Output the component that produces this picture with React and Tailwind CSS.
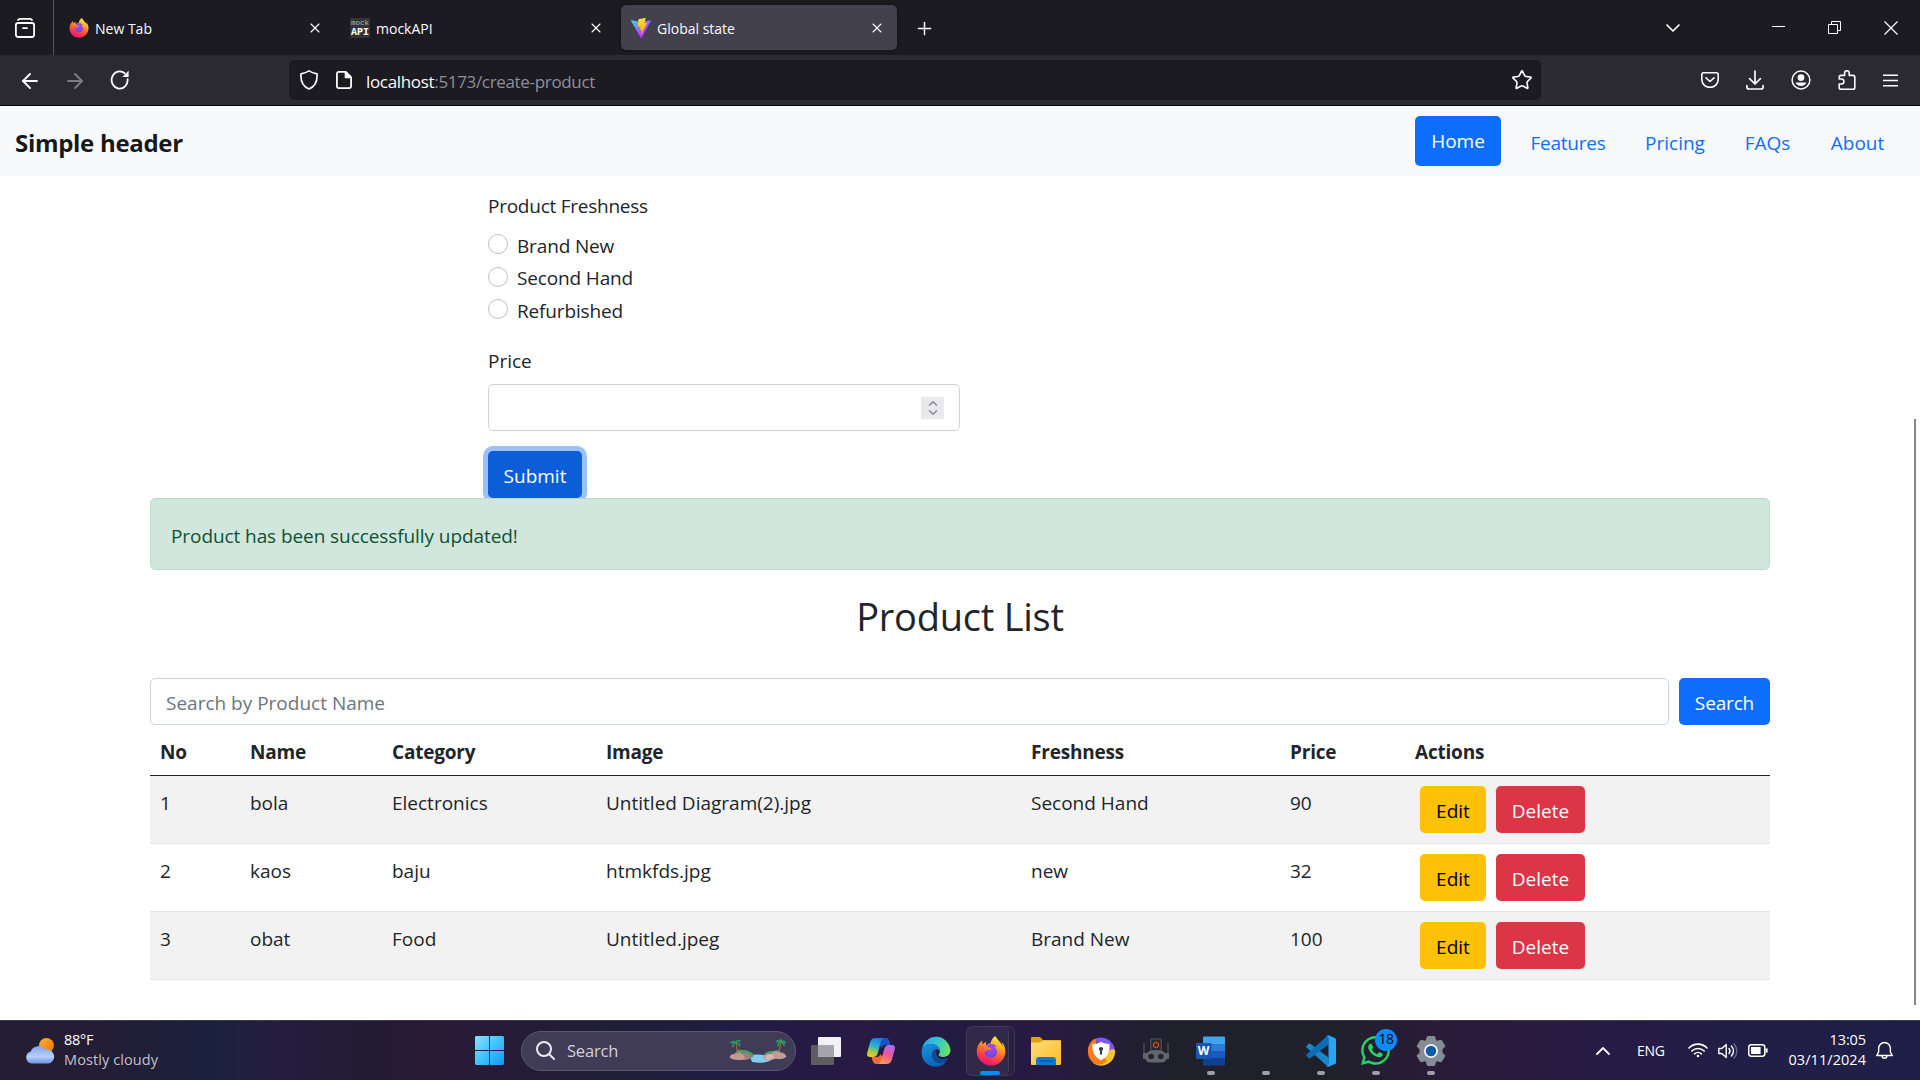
import React from "react";
import { X, Plus, ChevronDown, ArrowLeft, ArrowRight, Star } from "lucide-react";
import { FaFirefoxBrowser, FaWhatsapp } from "react-icons/fa";

function FirefoxLogo({ className = "" }) {
  return (
    <span className={`relative block ${className}`}>
      <svg viewBox="0 0 32 32" className="absolute inset-0 h-full w-full">
        <defs>
          <linearGradient id="fx" x1="0.75" y1="0" x2="0.35" y2="1">
            <stop offset="0" stopColor="#fff44f" />
            <stop offset="0.3" stopColor="#ffb224" />
            <stop offset="0.55" stopColor="#ff6a2b" />
            <stop offset="0.8" stopColor="#ff2f52" />
            <stop offset="1" stopColor="#e3127f" />
          </linearGradient>
          <radialGradient id="fxp" cx="0.5" cy="0.3" r="0.8">
            <stop offset="0" stopColor="#a34dff" />
            <stop offset="1" stopColor="#5a3fd0" />
          </radialGradient>
        </defs>
        <circle cx="16" cy="16.5" r="8.6" fill="url(#fxp)" />
      </svg>
      <FaFirefoxBrowser className="absolute inset-0 h-full w-full fill-[url(#fx)]" />
    </span>
  );
}

function ViteLogo() {
  return (
    <svg viewBox="0 0 256 257" className="h-5 w-5">
      <defs>
        <linearGradient id="v1" x1="-0.8%" x2="57.6%" y1="7.6%" y2="78.4%">
          <stop offset="0" stopColor="#41D1FF" />
          <stop offset="1" stopColor="#BD34FE" />
        </linearGradient>
        <linearGradient id="v2" x1="43.4%" x2="50.3%" y1="2.2%" y2="89%">
          <stop offset="0" stopColor="#FFEA83" />
          <stop offset="0.08" stopColor="#FFDD35" />
          <stop offset="1" stopColor="#FFA800" />
        </linearGradient>
      </defs>
      <path fill="url(#v1)" d="M255.153 37.938L134.897 252.976c-2.483 4.44-8.862 4.466-11.382.048L.875 37.958c-2.746-4.814 1.371-10.646 6.827-9.67l120.385 21.517a6.537 6.537 0 0 0 2.322-.004l117.867-21.483c5.438-.991 9.574 4.796 6.877 9.62Z" />
      <path fill="url(#v2)" d="M185.432.063L96.44 17.501a3.268 3.268 0 0 0-2.634 3.014l-5.474 92.456a3.268 3.268 0 0 0 3.997 3.378l24.777-5.718c2.318-.535 4.413 1.507 3.936 3.838l-7.361 36.047c-.495 2.426 1.782 4.5 4.151 3.78l15.304-4.649c2.372-.72 4.652 1.36 4.15 3.788l-11.698 56.621c-.732 3.542 3.979 5.473 5.943 2.437l1.313-2.028l72.516-144.72c1.215-2.423-.88-5.186-3.54-4.672l-25.505 4.922c-2.396.462-4.435-1.77-3.759-4.114l16.646-57.705c.677-2.35-1.37-4.583-3.769-4.113Z" />
    </svg>
  );
}

function Tab({ icon, title, active, className = "" }) {
  return (
    <div
      className={`flex h-[45px] shrink-0 items-center rounded-[5px] pl-[10px] pr-[12px] ${active ? "bg-[#42414d] shadow-[0_0_4px_rgba(0,0,0,0.5)]" : ""} ${className}`}
    >
      <span className="w-5 shrink-0">{icon}</span>
      <span className="flex-1 whitespace-nowrap pl-[6px] pt-[2px] text-[14px] leading-5 text-[#fbfbfe]">{title}</span>
      <X className="h-4 w-4 shrink-0 text-[#fbfbfe]" strokeWidth={1.7} />
    </div>
  );
}

function TabBar() {
  return (
    <div className="flex h-[55px] items-center bg-[#1c1b22] text-[#fbfbfe]">
      <div className="flex h-full w-[54px] items-center border-r border-[#55545c] pl-[15px]">
        <svg viewBox="0 0 20 20" className="h-5 w-5" fill="none" stroke="currentColor" strokeWidth="1.8" strokeLinecap="round">
          <rect x="0.9" y="5" width="18.2" height="14" rx="2.2" />
          <path d="M3 2 Q3.6 0.9 5 0.9 H15 Q16.4 0.9 17 2" />
          <path d="M8 10.2 H12" />
        </svg>
      </div>
      <Tab className="ml-[5px] w-[276px]" icon={<FirefoxLogo className="h-5 w-5" />} title="New Tab" />
      <Tab
        className="ml-[5px] w-[276px]"
        icon={
          <span className="block h-5 w-5 bg-[#333] text-center font-['Liberation_Mono']">
            <span className="block h-[10px] text-[7.5px] leading-[10px] text-[#b8b8b8]">mock</span>
            <span className="block text-[10px] font-bold leading-[9px] text-white">API</span>
          </span>
        }
        title="mockAPI"
      />
      <Tab className="ml-[5px] w-[276px]" active icon={<ViteLogo />} title="Global state" />
      <Plus className="ml-[17px] mt-[2px] h-[21px] w-[21px]" strokeWidth={1.7} />
      <div className="ml-auto flex items-center pr-[22px]">
        <ChevronDown className="mr-[87px] h-6 w-6" strokeWidth={1.7} />
        <svg viewBox="0 0 13 13" className="mr-[43px] h-[13px] w-[13px]" stroke="currentColor">
          <path d="M0 5.5 H13" />
        </svg>
        <svg viewBox="0 0 13 13" className="mr-[43px] h-[13px] w-[13px]" fill="none" stroke="currentColor">
          <path d="M0.5 3.5 H9.5 V12.5 H0.5 Z M3.5 3.5 V0.5 H12.5 V9.5 H9.5" />
        </svg>
        <svg viewBox="0 0 14 14" className="h-[14px] w-[14px]" stroke="currentColor" strokeWidth="1.2">
          <path d="M0.5 0.5 L13.5 13.5 M13.5 0.5 L0.5 13.5" />
        </svg>
      </div>
    </div>
  );
}

function NavBar() {
  return (
    <div className="flex h-[51px] items-center border-b border-[#08080c] bg-[#2b2a33] text-[#fbfbfe]">
      <ArrowLeft className="ml-[18px] mt-px h-6 w-6" strokeWidth={1.9} />
      <ArrowRight className="ml-[21px] mt-px h-6 w-6 text-[#7b7a82]" strokeWidth={1.9} />
      <svg viewBox="0 0 20 20" className="ml-[23px] h-5 w-5" fill="none" stroke="currentColor" strokeWidth="1.8" strokeLinecap="round">
        <path d="M17.6 9.2 A8 8.6 0 1 1 14.6 3.3" />
        <path d="M18.6 0.8 V7 H12.4 Z" fill="currentColor" stroke="none" />
      </svg>
      <div className="ml-[159px] flex h-10 w-[1252px] items-center rounded-[5px] bg-[#1c1b22]">
        <svg viewBox="0 0 20 20" className="ml-[10px] h-5 w-5" fill="none" stroke="currentColor" strokeWidth="1.7" strokeLinejoin="round">
          <path d="M10 0.9 C12.5 2.6 15 3.3 18 3.8 C18.6 10.5 16.2 16.3 10 19.1 C3.8 16.3 1.4 10.5 2 3.8 C5 3.3 7.5 2.6 10 0.9 Z" />
        </svg>
        <svg viewBox="0 0 16 18" className="ml-[17px] h-[18px] w-4" fill="none" stroke="currentColor" strokeWidth="1.8" strokeLinejoin="round">
          <path d="M9.6 0.9 H3 Q0.9 0.9 0.9 3 V15 Q0.9 17.1 3 17.1 H13 Q15.1 17.1 15.1 15 V6.4 Z" />
          <path d="M9.6 0.9 V6.4 H15.1 Z" fill="currentColor" />
        </svg>
        <span className="ml-[14px] flex-1 pt-1 text-[17px] leading-6 tracking-[-0.33px] text-[#8f8f96]">
          <span className="text-[#fbfbfe]">localhost</span>:5173/create-product
        </span>
        <Star className="mr-[8px] h-[22px] w-[22px]" strokeWidth={1.8} />
      </div>
      <div className="ml-auto flex items-center pr-[22px]">
        <svg viewBox="0 0 18 16" className="mr-[27px] h-4 w-[18px]" fill="none" stroke="currentColor" strokeWidth="1.6" strokeLinecap="round" strokeLinejoin="round">
          <path d="M2.6 0.8 H15.4 Q17.2 0.8 17.2 2.6 V7.4 A8.2 8 0 0 1 0.8 7.4 V2.6 Q0.8 0.8 2.6 0.8 Z" />
          <path d="M5 5.8 L9 9.5 L13 5.8" />
        </svg>
        <svg viewBox="0 0 18 20" className="mr-[27px] h-5 w-[18px]" fill="none" stroke="currentColor" strokeWidth="1.7" strokeLinecap="round" strokeLinejoin="round">
          <path d="M9 1 V14 M3.6 8.6 L9 14 L14.4 8.6" />
          <path d="M0.9 15.5 V17 Q0.9 19 3 19 H15 Q17.1 19 17.1 17 V15.5" />
        </svg>
        <svg viewBox="0 0 20 20" className="mr-[27px] h-5 w-5" fill="none" stroke="currentColor" strokeWidth="1.5">
          <circle cx="10" cy="10" r="8.9" />
          <circle cx="10" cy="7.6" r="3.4" fill="currentColor" stroke="none" />
          <path d="M4.6 12.6 H15.4 Q14 16 10 16 Q6 16 4.6 12.6 Z" fill="currentColor" stroke="none" />
        </svg>
        <svg viewBox="0 0 18 20" className="mr-[27px] h-5 w-[18px]" fill="none" stroke="currentColor" strokeWidth="1.6" strokeLinejoin="round">
          <path d="M1.2 9 V7.2 Q1.2 5.4 3 5.4 H6.6 V3 A2.3 2.3 0 0 1 11.2 3 V5.4 H15 Q16.8 5.4 16.8 7.2 V17.4 Q16.8 19.2 15 19.2 H3 Q1.2 19.2 1.2 17.4 V14 H3.4 A2.4 2.4 0 0 0 3.4 9 Z" />
        </svg>
        <svg viewBox="0 0 15 13" className="h-[13px] w-[15px]" stroke="currentColor" strokeWidth="1.5">
          <path d="M0 1.2 H15 M0 6.5 H15 M0 11.8 H15" />
        </svg>
      </div>
    </div>
  );
}

function SiteHeader() {
  return (
    <header className="flex h-[70px] justify-between bg-[#f8f9fb] pl-[15px] pr-[15px]">
      <span className="pt-[19px] text-[24px] font-bold leading-9 tracking-[-0.3px] text-[#16181b]">Simple header</span>
      <nav className="flex text-[19px] text-[#0d6efd]">
        <a className="mt-[10px] mr-[10px] flex h-[50px] w-[86px] justify-center rounded-[5px] bg-[#0d6efd] pt-[9px] leading-8 text-white">Home</a>
        <a className="w-[114px] pt-[21px] text-center leading-8 tracking-[-0.25px]">Features</a>
        <a className="w-[100px] pt-[21px] text-center leading-8">Pricing</a>
        <a className="w-[85px] pt-[21px] text-center leading-8">FAQs</a>
        <a className="w-[95px] pt-[21px] text-center leading-8">About</a>
      </nav>
    </header>
  );
}

function ProductForm() {
  return (
    <form className="ml-[488px] flex w-[472px] flex-col pt-[14px]">
      <span className="h-10 leading-8 tracking-[-0.25px]">Product Freshness</span>
      {["Brand New", "Second Hand", "Refurbished"].map((label, i) => (
        <label key={label} className={`flex ${i === 0 ? "h-[33px]" : "h-8"}`}>
          <span className="mt-1 h-5 w-5 rounded-full border border-[#bfbfbf] bg-white" />
          <span className={`pl-[9px] tracking-[-0.15px] ${i === 1 ? "leading-[30px]" : "leading-8"}`}>{label}</span>
        </label>
      ))}
      <span className="mt-[18px] h-[39px] leading-8">Price</span>
      <div className="flex h-[47px] items-center justify-end rounded-[5px] border border-[#ced4da] pr-[15px]">
        <span className="flex h-[22px] w-[23px] items-center justify-center bg-[#e9e9ed]">
          <svg viewBox="0 0 10 16" className="h-4 w-[10px]" fill="none" stroke="#8f8f9d" strokeWidth="1.7">
            <path d="M1 5.5 L5 1.8 L9 5.5 M1 10.5 L5 14.2 L9 10.5" />
          </svg>
        </span>
      </div>
      <button type="button" className="mt-5 h-[47px] w-[94px] rounded-[5px] bg-[#0b5ed7] pt-[1px] text-center leading-[48px] text-white ring-5 ring-[#98c1fe]">
        Submit
      </button>
    </form>
  );
}

const products = [
  ["1", "bola", "Electronics", "Untitled Diagram(2).jpg", "Second Hand", "90"],
  ["2", "kaos", "baju", "htmkfds.jpg", "new", "32"],
  ["3", "obat", "Food", "Untitled.jpeg", "Brand New", "100"],
];

const columns = "grid grid-cols-[90px_142px_214px_425px_259px_125px_1fr]";

function ProductTable() {
  return (
    <div>
      <div className={`${columns} h-[51px] border-b border-[#212529] pt-[11px] font-bold leading-8 tracking-[-0.2px]`}>
        {["No", "Name", "Category", "Image", "Freshness", "Price", "Actions"].map((h) => (
          <span key={h} className="pl-[10px]">{h}</span>
        ))}
      </div>
      {products.map((row, i) => (
        <div key={row[0]} className={`${columns} h-[68px] border-b border-[#dee2e6] pt-[10px] leading-8 ${i % 2 === 0 ? "bg-[#f2f2f2]" : ""}`}>
          {row.map((cell, j) => (
            <span key={j} className="whitespace-nowrap pl-[10px] pt-px">{cell}</span>
          ))}
          <span className="flex pl-[15px]">
            <button type="button" className="mr-[10px] h-[47px] w-[66px] rounded-[5px] bg-[#ffc107] pt-[3px] text-center text-black">Edit</button>
            <button type="button" className="h-[47px] w-[89px] rounded-[5px] bg-[#dc3545] pt-[3px] text-center text-white">Delete</button>
          </span>
        </div>
      ))}
    </div>
  );
}

function AppCell({ children, running }) {
  return (
    <div className="relative flex h-[60px] w-[55px] shrink-0 items-center justify-center">
      {children}
      {running && <span className="absolute bottom-[6px] left-[24px] h-1 w-2 rounded-full bg-[#a09fa9]" />}
    </div>
  );
}

function WeatherIcon() {
  return (
    <svg viewBox="0 0 30 26" className="h-[26px] w-[30px]">
      <defs>
        <linearGradient id="sun" x1="0" y1="0" x2="1" y2="1">
          <stop offset="0" stopColor="#fbb52b" />
          <stop offset="1" stopColor="#f0700e" />
        </linearGradient>
        <linearGradient id="cloud" x1="0" y1="0" x2="0" y2="1">
          <stop offset="0" stopColor="#7fa4ea" />
          <stop offset="0.6" stopColor="#b7d0fb" />
          <stop offset="1" stopColor="#6a94e6" />
        </linearGradient>
      </defs>
      <circle cx="21.5" cy="7.5" r="7.5" fill="url(#sun)" />
      <path d="M6.5 25.5 A6 6 0 0 1 5.5 13.8 A8.6 8.6 0 0 1 20.5 11.6 A6.8 6.8 0 1 1 23.5 25.5 Z" fill="url(#cloud)" />
    </svg>
  );
}

function SearchScene() {
  return (
    <svg viewBox="0 0 60 26" className="h-[26px] w-[58px]">
      <path d="M21 18 Q30 15 39 18 L44 22 Q38 26.5 24 24.5 Z" fill="#82cdf0" />
      <path d="M5 17 Q9 10 13 12 Q20 11 26 17 L24 20 H4 Z" fill="#4b9a68" />
      <path d="M36 16 Q42 12 46 13 Q53 10 56 18 L40 20 Z" fill="#4b9a68" />
      <path d="M0.5 20 Q2 15 6 16.5 Q9 11.5 13 16 Q19 14.5 23.5 19 Q21 22.5 14 22 Q5 23 0.5 20 Z" fill="#c59a94" />
      <path d="M13 16 Q17 17 16 22 L22 20.5 L23.5 19 Q19 14.5 13 16 Z" fill="#a8797a" />
      <path d="M35 20 Q38 15 43 16 Q47 11.5 52 14.5 Q58 14 59.5 19 Q56 22.5 48 21 Q40 24 35 20 Z" fill="#c59a94" />
      <path d="M43 16 Q47 17 46 21 L40 22 Q37 21 38 18 Z" fill="#dab4ab" />
      <path d="M7.5 5 L9 16 M54 3.5 L51.5 14" stroke="#a86b2c" strokeWidth="1.3" />
      <path d="M7 4.5 Q4 2 1.5 5 M7 4.5 Q4 5 4 9 M7 4.5 Q9 1 12 3 M7 4.5 Q11 5 11 8 M54 3.5 Q51 1 48.5 4 M54 3.5 Q51 4 50.5 8 M54 3.5 Q57 1.5 58.5 5 M54 3.5 V0.5 M54 3.5 Q57 4.5 57 7.5" stroke="#2b9a66" strokeWidth="1.7" fill="none" />
    </svg>
  );
}

function StartIcon() {
  return (
    <svg viewBox="0 0 29 29" className="h-[29px] w-[29px]">
      <defs>
        <linearGradient id="win" gradientUnits="userSpaceOnUse" x1="0" y1="0" x2="29" y2="29">
          <stop offset="0" stopColor="#8be1ff" />
          <stop offset="0.5" stopColor="#3fc3fd" />
          <stop offset="1" stopColor="#0f96fb" />
        </linearGradient>
      </defs>
      <path fill="url(#win)" d="M1 0 H14 V14 H0 V1 Z M15 0 H28 L29 1 V14 H15 Z M0 15 H14 V29 H1 L0 28 Z M15 15 H29 V28 L28 29 H15 Z" />
    </svg>
  );
}

function TaskViewIcon() {
  return (
    <svg viewBox="0 0 30 28" className="h-[28px] w-[30px]">
      <rect x="0" y="8" width="23" height="20" rx="1" fill="#5e5d62" />
      <rect x="7" y="0" width="23" height="20" rx="1" fill="#f2f2f4" />
      <path d="M7 8 H23 V20 H7 Z" fill="#a6a5ab" />
    </svg>
  );
}

function CopilotIcon() {
  return (
    <svg viewBox="0 0 28 26" className="h-[26px] w-[28px]">
      <defs>
        <linearGradient id="cp1" x1="0.6" y1="0" x2="0.3" y2="1">
          <stop offset="0" stopColor="#1f7ae8" />
          <stop offset="0.45" stopColor="#2fb3cf" />
          <stop offset="0.75" stopColor="#9fcf3f" />
          <stop offset="1" stopColor="#f5c527" />
        </linearGradient>
        <linearGradient id="cp2" x1="0.7" y1="0" x2="0.3" y2="1">
          <stop offset="0" stopColor="#a96bf4" />
          <stop offset="0.5" stopColor="#f0559a" />
          <stop offset="1" stopColor="#fb9b4b" />
        </linearGradient>
      </defs>
      <path d="M15 0 H19.5 Q21.5 0 22.3 3 L23.5 7 H18 Q15.5 7 14.7 10 L12.5 7 Z" fill="#1b52c4" />
      <path d="M13 26 H8.5 Q6.5 26 5.7 23 L4.5 19 H10 Q12.5 19 13.3 16 L15.5 19 Z" fill="#f26a3a" />
      <path d="M8.5 0 H17 Q14.8 0.6 14 3.6 L10.8 15 Q9.8 19 6 19 H3 Q-0.8 19 0.3 14.5 L3.2 4 Q4.4 0 8.5 0 Z" fill="url(#cp1)" />
      <path d="M19.5 26 H11 Q13.2 25.4 14 22.4 L17.2 11 Q18.2 7 22 7 H25 Q28.8 7 27.7 11.5 L24.8 22 Q23.6 26 19.5 26 Z" fill="url(#cp2)" />
    </svg>
  );
}

function EdgeIcon() {
  return (
    <svg viewBox="0 0 32 32" className="h-[32px] w-[30px]" preserveAspectRatio="none">
      <defs>
        <linearGradient id="e1" x1="0" y1="0.3" x2="1" y2="0.5">
          <stop offset="0" stopColor="#2ba8e8" />
          <stop offset="0.5" stopColor="#2fc4d8" />
          <stop offset="1" stopColor="#6fe25c" />
        </linearGradient>
        <linearGradient id="e2" x1="0" y1="0" x2="0.6" y2="1">
          <stop offset="0" stopColor="#1b94e0" />
          <stop offset="1" stopColor="#0c5fb8" />
        </linearGradient>
      </defs>
      <path d="M1 14 A15.5 15.5 0 0 1 31.5 15 C31.5 20 27 22 23.5 22 C20 22 18.6 20.6 18.8 19.6 C19.2 18.6 20.3 18 20 15.5 C19.5 11 14 8.5 9.5 9 C5 9.5 2 12 1 14 Z" fill="url(#e1)" />
      <path d="M0.6 17 C0.6 11 6 8.6 10.5 9 C16 9.5 20.4 12.5 20 16 C17 12.5 12 15 12 20 C12 26.5 19 30 27 25.5 C25 29.5 20.5 31.8 16 31.8 C7 31.8 0.6 25.5 0.6 17 Z" fill="url(#e2)" />
      <path d="M12 20 C12 26.5 19 30 27.5 25.5 C30 23.6 28.6 22.6 27 23.5 C20 25.5 15.4 22 16 14 C13.5 15 12 17 12 20 Z" fill="#114a8c" />
    </svg>
  );
}

function ExplorerIcon() {
  return (
    <svg viewBox="0 0 30 28" className="h-[28px] w-[30px]">
      <defs>
        <linearGradient id="fold" x1="0" y1="0" x2="1" y2="1">
          <stop offset="0" stopColor="#ffdd7c" />
          <stop offset="1" stopColor="#fbbd22" />
        </linearGradient>
      </defs>
      <path d="M0 1 Q0 0 1 0 H9 L12 3 H29 Q30 3 30 4 V12 H0 Z" fill="#e0a010" />
      <path d="M0 5.5 H9 L12 3.5 H29 Q30 3.5 30 4.5 V27 Q30 28 29 28 H1 Q0 28 0 27 Z" fill="url(#fold)" />
      <path d="M5 28 V23 Q5 20 8 20 H22 Q25 20 25 23 V28 Z" fill="#1279cf" />
      <path d="M8.5 24 H21.5" stroke="#0a4a91" strokeWidth="1.2" />
    </svg>
  );
}

function ShieldBrowserIcon() {
  return (
    <svg viewBox="0 0 28 30" className="h-[30px] w-[28px]">
      <path d="M7 3.5 A14 14.5 0 0 1 28 15 Q27 18 24 18.5 L14 10 Z" fill="#8454ee" />
      <path d="M28 14 A14 14.5 0 0 1 6 27 L14 20 L25 13 Z" fill="#f7c62c" />
      <path d="M8 2.5 A14.5 14.8 0 0 0 9 28.6 Q16 30 20 24 L9 16 L9.5 6 Z" fill="#f97a1f" />
      <path d="M14 6 Q18 8 22.5 8 Q24 19 14 24.5 Q4 19 5.5 8 Q10 8 14 6 Z" fill="#fff" />
      <circle cx="14" cy="13" r="2.1" fill="#2c3850" />
      <path d="M13.2 14 H14.8 L15.2 18.6 H12.8 Z" fill="#2c3850" />
    </svg>
  );
}

function RobotIcon() {
  return (
    <svg viewBox="0 0 28 26" className="h-[26px] w-[28px]">
      <path d="M2 5 V18 M26 5 V18" stroke="#4a4b50" strokeWidth="1.4" />
      <rect x="8.8" y="1" width="10.4" height="12" rx="1" fill="#25262c" stroke="#55565b" strokeWidth="1.2" />
      <circle cx="14" cy="7" r="2.6" fill="none" stroke="#d8602b" strokeWidth="1.6" strokeDasharray="1.4 0.6" />
      <path d="M1 15 H5 Q7 12 14 12 Q21 12 23 15 H27 V21 H24.5 Q23 24.5 20 24.5 H8 Q5 24.5 3.5 21 H1 Z" fill="#65666b" />
      <circle cx="9.2" cy="18.5" r="2.8" fill="#202735" />
      <circle cx="18.8" cy="18.5" r="2.8" fill="#202735" />
    </svg>
  );
}

function WordIcon() {
  return (
    <svg viewBox="0 0 29 30" className="h-[30px] w-[29px]">
      <path d="M8 0.5 H28 Q29 0.5 29 1.5 V8 H7 V1.5 Q7 0.5 8 0.5 Z" fill="#41a5ee" />
      <path d="M7 8 H29 V15 H7 Z" fill="#2b7cd3" />
      <path d="M7 15 H29 V22 H7 Z" fill="#185abd" />
      <path d="M7 22 H29 V28.5 Q29 29.5 28 29.5 H8 Q7 29.5 7 28.5 Z" fill="#103f91" />
      <rect x="0" y="7" width="15.5" height="16" rx="1.2" fill="#1756b8" />
      <text x="7.6" y="19.4" textAnchor="middle" fontSize="12" fontWeight="700" fill="#fff" fontFamily="Open Sans">W</text>
    </svg>
  );
}

function CodeIcon() {
  return (
    <svg viewBox="0 0 30 32" className="h-[32px] w-[30px]">
      <path d="M0.4 11 L2.8 8.8 Q3.6 8.2 4.6 8.9 L22.5 22.6 V30 Q21.2 31 20 30 L0.5 12.4 Q-0.1 11.7 0.4 11 Z" fill="#1a86cc" />
      <path d="M0.4 21 L2.8 23.2 Q3.6 23.8 4.6 23.1 L22.5 9.4 V2 Q21.2 1 20 2 L0.5 19.6 Q-0.1 20.3 0.4 21 Z" fill="#0a6db8" />
      <path d="M22.5 0.2 L29 3 Q30 3.5 30 4.6 V27.4 Q30 28.5 29 29 L22.5 31.8 Q20.8 32 20 30.6 Q22.5 31 22.5 28.6 V3.4 Q22.5 1 20 1.4 Q21 0 22.5 0.2 Z" fill="#27a5f2" />
    </svg>
  );
}

function SettingsIcon() {
  return (
    <svg viewBox="0 0 30 30" className="h-[30px] w-[30px]">
      <path d="M11.5 0.5 H18.5 L19.8 4.6 L21 5.2 L25.3 4.2 L28.9 10.2 L26 13.5 V16.5 L28.9 19.8 L25.3 25.8 L21 24.8 L19.8 25.4 L18.5 29.5 H11.5 L10.2 25.4 L9 24.8 L4.7 25.8 L1.1 19.8 L4 16.5 V13.5 L1.1 10.2 L4.7 4.2 L9 5.2 L10.2 4.6 Z" fill="#858c95" stroke="#858c95" strokeLinejoin="round" />
      <circle cx="15" cy="15" r="6.1" fill="#0f5ba8" stroke="#f2f3f5" strokeWidth="1.8" />
    </svg>
  );
}

function Taskbar() {
  return (
    <div className="flex h-[60px] items-center border-t border-[#3c3c4c] bg-[linear-gradient(90deg,#241d33_0px,#231d35_100px,#1b213d_205px,#241d40_280px,#221c32_365px,#2a1a36_435px,#1f1e38_620px,#211b46_750px,#281a44_860px,#221b42_920px,#281a42_1040px,#20202c_1170px,#20202c_1340px,#2a1b3a_1440px,#2a1b3f_1530px,#251c46_1620px,#1e1f48_1900px)] font-['Open_Sans'] text-[14.5px] text-white">
      <div className="flex w-[475px] items-center pl-[25px]">
        <WeatherIcon />
        <div className="-mt-[2px] pl-[9px] leading-5">
          <div className="tracking-[-0.3px]">88°F</div>
          <div className="tracking-[0.1px] text-[#c3c1ca]">Mostly cloudy</div>
        </div>
      </div>
      <StartIcon />
      <div className="ml-[17px] flex h-10 w-[275px] items-center rounded-full border border-[#5c5873] bg-[#403b57] pl-[14px] pr-[8px]">
        <svg viewBox="0 0 19 19" className="h-[19px] w-[19px]" fill="none" stroke="#ececf0" strokeWidth="2" strokeLinecap="round">
          <circle cx="8" cy="8" r="7" />
          <path d="M13 13 L18 18" />
        </svg>
        <span className="flex-1 pl-[12px] pt-px text-[16.5px] tracking-[-0.2px] text-[#d3d1da]">Search</span>
        <SearchScene />
      </div>
      <div className="ml-[2px] flex">
        <AppCell><TaskViewIcon /></AppCell>
        <AppCell><CopilotIcon /></AppCell>
        <AppCell><EdgeIcon /></AppCell>
        <AppCell>
          <span className="absolute left-[9px] top-[5px] h-[50px] w-[43px] rounded-[6px] border border-[#3c3450] bg-[#2a213e]" />
          <span className="absolute left-[3px] top-[5px] h-[50px] w-[43px] rounded-[6px] border border-[#40395a] bg-[#30294a]" />
          <FirefoxLogo className="h-[30px] w-[30px]" />
          <span className="absolute bottom-[6px] left-[17px] h-1 w-5 rounded-full bg-[#0a8cff]" />
        </AppCell>
        <AppCell><ExplorerIcon /></AppCell>
        <AppCell><ShieldBrowserIcon /></AppCell>
        <AppCell><RobotIcon /></AppCell>
        <AppCell running><WordIcon /></AppCell>
        <AppCell running />
        <AppCell running><CodeIcon /></AppCell>
        <AppCell running>
          <FaWhatsapp className="h-[33px] w-[33px] text-[#25d366]" />
          <span className="absolute left-[27px] top-[8px] flex h-[22px] w-[22px] items-center justify-center rounded-full bg-[#0a8cff] pb-px text-[14px] leading-none tracking-[-0.5px] text-black">18</span>
        </AppCell>
        <AppCell running><SettingsIcon /></AppCell>
      </div>
      <div className="ml-auto flex items-center pr-[27px]">
        <svg viewBox="0 0 14 8" className="mr-[27px] h-2 w-[14px]" fill="none" stroke="#fff" strokeWidth="1.8" strokeLinecap="round">
          <path d="M1 7 L7 1 L13 7" />
        </svg>
        <span className="mr-[22px] w-[29px] text-[14px] tracking-[-0.3px]">ENG</span>
        <svg viewBox="0 0 20 15" className="mr-[10px] h-[15px] w-5" fill="none" stroke="#fff" strokeWidth="1.6" strokeLinecap="round">
          <path d="M1 5 A12.5 12.5 0 0 1 19 5 M3.8 8 A8.8 8.8 0 0 1 16.2 8 M6.6 10.8 A4.9 4.9 0 0 1 13.4 10.8" />
          <circle cx="10" cy="13" r="1.3" fill="#fff" stroke="none" />
        </svg>
        <svg viewBox="0 0 20 16" className="mr-[10px] h-4 w-5" fill="none" stroke="#fff" strokeWidth="1.4" strokeLinejoin="round" strokeLinecap="round">
          <path d="M0.8 5.5 H3.8 L8.2 1.5 V14.5 L3.8 10.5 H0.8 Z M11 5.5 A4 4 0 0 1 11 10.5 M13.4 3 A7.2 7.2 0 0 1 13.4 13" />
          <path d="M16 1 A10 10 0 0 1 16 15" stroke="#6b6a86" />
        </svg>
        <svg viewBox="0 0 20 13" className="mr-[20px] h-[13px] w-5" fill="none" stroke="#fff" strokeWidth="1.5">
          <rect x="0.8" y="0.8" width="16" height="11.4" rx="2.4" />
          <rect x="3" y="3" width="9.6" height="7" fill="#fff" stroke="none" />
          <path d="M18.6 4.4 V8.6" strokeWidth="2" />
        </svg>
        <div className="-mt-[2px] w-[78px] whitespace-nowrap text-right leading-5">
          <div className="tracking-[-0.1px]">13:05</div>
          <div className="tracking-[0.05px]">03/11/2024</div>
        </div>
        <svg viewBox="0 0 18 19" className="ml-[10px] h-[19px] w-[17px]" fill="none" stroke="#fff" strokeWidth="1.5" strokeLinejoin="round">
          <path d="M9 1 A6.2 6.2 0 0 1 15.2 7.2 V11 L17.2 14.8 H0.8 L2.8 11 V7.2 A6.2 6.2 0 0 1 9 1 Z M6.5 15.2 A2.5 2.5 0 0 0 11.5 15.2" />
        </svg>
      </div>
    </div>
  );
}

export default function App() {
  return (
    <div className="flex h-[1080px] w-[1920px] flex-col overflow-hidden bg-white font-['Open_Sans',sans-serif] text-[#212529]">
      <TabBar />
      <NavBar />
      <SiteHeader />
      <main className="relative h-[844px] text-[19px]">
        <ProductForm />
        <div className="relative mx-[150px]">
          <div className="h-[72px] rounded-[5px] border border-[#badbcc] bg-[#d1e7dd] pl-5 pt-[21px] leading-8 tracking-[-0.08px] text-[#0f5132]">
            Product has been successfully updated!
          </div>
          <h2 className="h-[108px] pt-[22px] text-center text-[38px] leading-[48px] tracking-[-0.25px]">Product List</h2>
          <div className="flex gap-[10px]">
            <div className="h-[47px] flex-1 rounded-[5px] border border-[#ced4da] pl-[15px] pt-[1px] leading-[47px] text-[#6c757d]">
              Search by Product Name
            </div>
            <button type="button" className="h-[47px] w-[91px] rounded-[5px] bg-[#0d6efd] pt-[1px] text-center leading-[48px] tracking-[-0.15px] text-white">Search</button>
          </div>
          <ProductTable />
        </div>
        <div className="absolute right-[4px] top-[243px] h-[586px] w-[2px] bg-[#868686]" />
      </main>
      <Taskbar />
    </div>
  );
}
